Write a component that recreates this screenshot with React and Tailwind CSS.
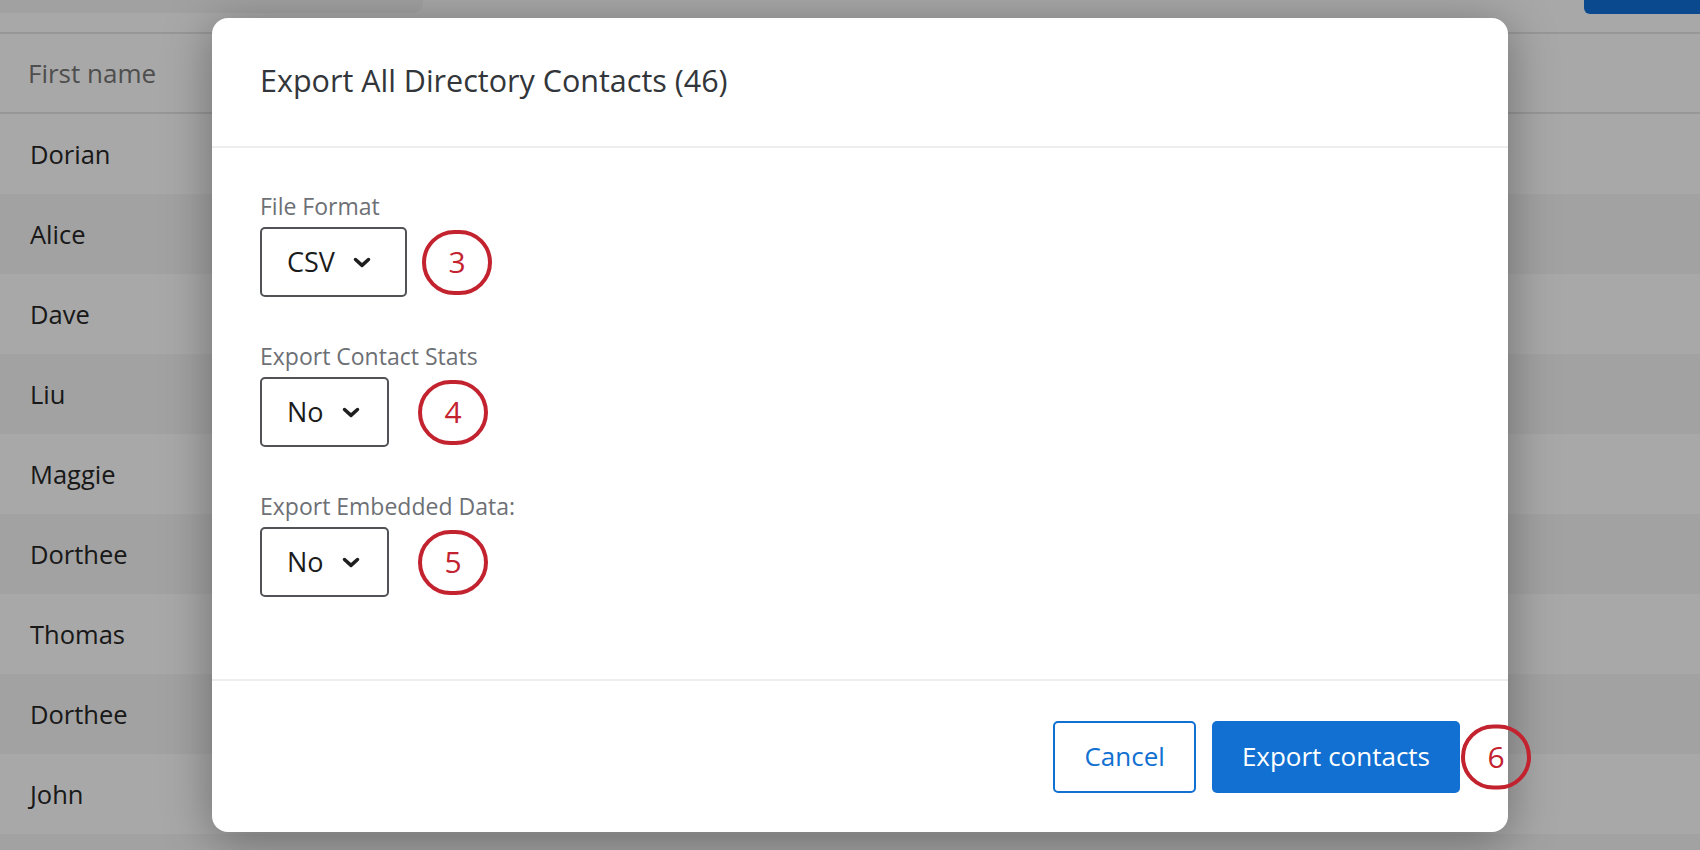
import React from 'react'

const names = ['Dorian', 'Alice', 'Dave', 'Liu', 'Maggie', 'Dorthee', 'Thomas', 'Dorthee', 'John']

function Chevron() {
  return (
    <svg width="18" height="11" viewBox="0 0 18 11" fill="none" className="text-[#1f1f1f]">
      <path d="M2.5 2.5 L9 8.4 L15.5 2.5" stroke="currentColor" strokeWidth="3.5" strokeLinecap="round" strokeLinejoin="round" />
    </svg>
  )
}

function Marker({ n, className = '' }) {
  return (
    <div className={`w-[70px] h-[65px] rounded-full border-[4px] border-[#c3222f] flex items-center justify-center text-[30px] leading-none text-[#c3222f] ${className}`}>
      {n}
    </div>
  )
}

function Field({ label, value, width, markerGap, n }) {
  return (
    <div>
      <div className="text-[23px] leading-[32px] text-[#6d7075]">{label}</div>
      <div className="flex items-center mt-[5px]">
        <div className={`h-[70px] ${width} border-2 border-[#505256] rounded-[5px] flex items-center pl-[25px] gap-[18px] text-[27px] text-[#1b1b1b]`}>
          <span>{value}</span>
          <Chevron />
        </div>
        <Marker n={n} className={markerGap} />
      </div>
    </div>
  )
}

export default function App() {
  return (
    <div className="relative w-full h-[850px] overflow-hidden bg-white font-['Open_Sans','Noto_Sans',sans-serif]">
      {/* page behind the dialog */}
      <div className="h-[32px] flex justify-between">
        <div className="w-[423px] h-[13px] bg-[#f5f5f5] rounded-br-[10px]" />
        <div className="w-[116px] h-[14px] bg-[#1170d9] rounded-bl-[6px]" />
      </div>
      <div className="border-t-2 border-b-2 border-[#e6e6e6] h-[82px] flex items-center px-[28px] text-[26px] text-[#777]">
        First name
      </div>
      {names.map((name, i) => (
        <div key={i} className={`h-[80px] flex items-center px-[30px] text-[25.5px] text-[#262626] ${i % 2 ? 'bg-[#f6f6f6]' : 'bg-white'}`}>
          {name}
        </div>
      ))}
      <div className="h-[40px] bg-[#f6f6f6]" />

      <div className="absolute inset-0 bg-black/[0.34]" />

      {/* dialog */}
      <div className="absolute left-[212px] top-[18px] w-[1296px] h-[814px] bg-white rounded-[16px] shadow-[0_8px_48px_rgba(0,0,0,0.35)] flex flex-col">
        <div className="h-[130px] shrink-0 border-b-2 border-[#eeeeee] flex items-center px-[48px] pb-[3px] text-[30.5px] text-[#32363a]">
          Export All Directory Contacts (46)
        </div>

        <div className="flex-1 px-[48px] pt-[42px] flex flex-col gap-[43px]">
          <Field label="File Format" value="CSV" width="w-[147px]" markerGap="ml-[15px]" n="3" />
          <Field label="Export Contact Stats" value="No" width="w-[129px]" markerGap="ml-[29px]" n="4" />
          <Field label="Export Embedded Data:" value="No" width="w-[129px]" markerGap="ml-[29px]" n="5" />
        </div>

        <div className="relative h-[153px] shrink-0 border-t-2 border-[#eeeeee] flex items-center justify-end gap-[16px] px-[48px] text-[26px]">
          <button className="h-[72px] px-[29px] border-2 border-[#1170d1] rounded-[5px] text-[#1170d1]">
            Cancel
          </button>
          <button className="h-[72px] px-[30px] bg-[#1170d1] rounded-[5px] text-white">
            Export contacts
          </button>
          <Marker n="6" className="absolute right-[-23px] top-1/2 -translate-y-1/2" />
        </div>
      </div>
    </div>
  )
}
